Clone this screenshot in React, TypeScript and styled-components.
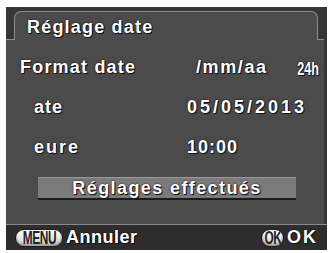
import styled, { createGlobalStyle } from 'styled-components';

const GlobalStyle = createGlobalStyle`
  html, body {
    margin: 0;
    padding: 0;
    background: #ffffff;
  }
  body {
    font-family: "Liberation Sans", Arial, sans-serif;
  }
`;

function App() {
  return (
    <>
      <GlobalStyle />
      <Screen>
        <Header>
          <Tab>Réglage date</Tab>
        </Header>
        <Body>
          <Row>
            <Label>Format date</Label>
            <Value $indent={9} $spacing={1.6}>/mm/aa</Value>
            <Small>24h</Small>
          </Row>
          <Row>
            <Label $indent={14} $spacing={1}>ate</Label>
            <Value $spacing={3}>05/05/2013</Value>
          </Row>
          <Row>
            <Label $indent={14} $spacing={2}>eure</Label>
            <Value $spacing={1}>10:00</Value>
          </Row>
          <DoneBar>Réglages effectués</DoneBar>
        </Body>
        <Footer>
          <Action>
            <Pill $width={48}>
              <PillText>MENU</PillText>
            </Pill>
            <ActionLabel>Annuler</ActionLabel>
          </Action>
          <Action>
            <Pill $width={23}>
              <PillText>OK</PillText>
            </Pill>
            <ActionLabel $spacing={2}>OK</ActionLabel>
          </Action>
        </Footer>
      </Screen>
    </>
  );
}

const shadow = '1px 1px 0 #111, 0 0 2px #000';

const Screen = styled.div`
  margin: 7px 0 0 6px;
  width: 321px;
  height: 243px;
  background: #363636;
  display: flex;
  flex-direction: column;
  color: #ffffff;
  font-weight: 700;
`;

const Header = styled.div`
  height: 32px;
  padding: 4px 9px 0 8px;
  box-sizing: border-box;
  display: flex;
  position: relative;
  z-index: 1;
`;

const Tab = styled.div`
  flex: 1;
  height: 29px;
  box-sizing: border-box;
  background: #4b4b4b;
  border: 1px solid #8e8e8e;
  border-bottom: none;
  border-radius: 7px 7px 0 0;
  padding: 5px 0 0 12px;
  font-size: 18px;
  letter-spacing: 1.2px;
  line-height: 20px;
  text-shadow: ${shadow};
`;

const Body = styled.div`
  height: 185px;
  margin-right: 3px;
  box-sizing: border-box;
  background: #4b4b4b;
  border-top: 1px solid #8e8e8e;
  padding: 7px 5px 0 14px;
  display: flex;
  flex-direction: column;
`;

const Row = styled.div`
  height: 40px;
  display: flex;
  align-items: center;
  font-size: 18px;
  text-shadow: ${shadow};
`;

const Label = styled.div<{ $indent?: number; $spacing?: number }>`
  width: 167px;
  box-sizing: border-box;
  padding-left: ${({ $indent }) => $indent ?? 0}px;
  letter-spacing: ${({ $spacing }) => $spacing ?? 1.2}px;
`;

const Value = styled.div<{ $indent?: number; $spacing?: number }>`
  flex: 1;
  padding-left: ${({ $indent }) => $indent ?? 0}px;
  letter-spacing: ${({ $spacing }) => $spacing ?? 1}px;
`;

const Small = styled.div`
  font-size: 18px;
  margin-top: 4px;
  transform: scaleX(0.7);
  transform-origin: right center;
`;

const DoneBar = styled.div`
  margin: 10px 0 0 18px;
  width: 258px;
  height: 23px;
  box-sizing: border-box;
  background: #7b7b7b;
  border-top: 1px solid #9a9a9a;
  border-bottom: 2px solid #1c1c1c;
  display: flex;
  align-items: center;
  justify-content: center;
  font-size: 18px;
  letter-spacing: 1.4px;
  text-shadow: ${shadow};
`;

const Footer = styled.div`
  flex: 1;
  background: #2d2d2d;
  border-top: 1px solid #8a8a8a;
  display: flex;
  align-items: center;
  justify-content: space-between;
  padding: 0 9px 0 9px;
`;

const Action = styled.div`
  display: flex;
  align-items: center;
  gap: 3px;
`;

const Pill = styled.div<{ $width: number }>`
  width: ${({ $width }) => $width}px;
  height: 18px;
  box-sizing: border-box;
  border-radius: 9px;
  border: 1px solid #1a1a1a;
  background: linear-gradient(#ffffff, #cfcfcf);
  box-shadow: inset 0 -2px 2px #9a9a9a;
  display: flex;
  align-items: center;
  justify-content: center;
  overflow: hidden;
`;

const PillText = styled.span`
  display: inline-block;
  color: #222222;
  font-size: 18px;
  line-height: 18px;
  transform: scaleX(0.66);
  letter-spacing: -0.5px;
`;

const ActionLabel = styled.div<{ $spacing?: number }>`
  font-size: 18px;
  letter-spacing: ${({ $spacing }) => $spacing ?? 0.5}px;
  text-shadow: ${shadow};
`;

export default App;
